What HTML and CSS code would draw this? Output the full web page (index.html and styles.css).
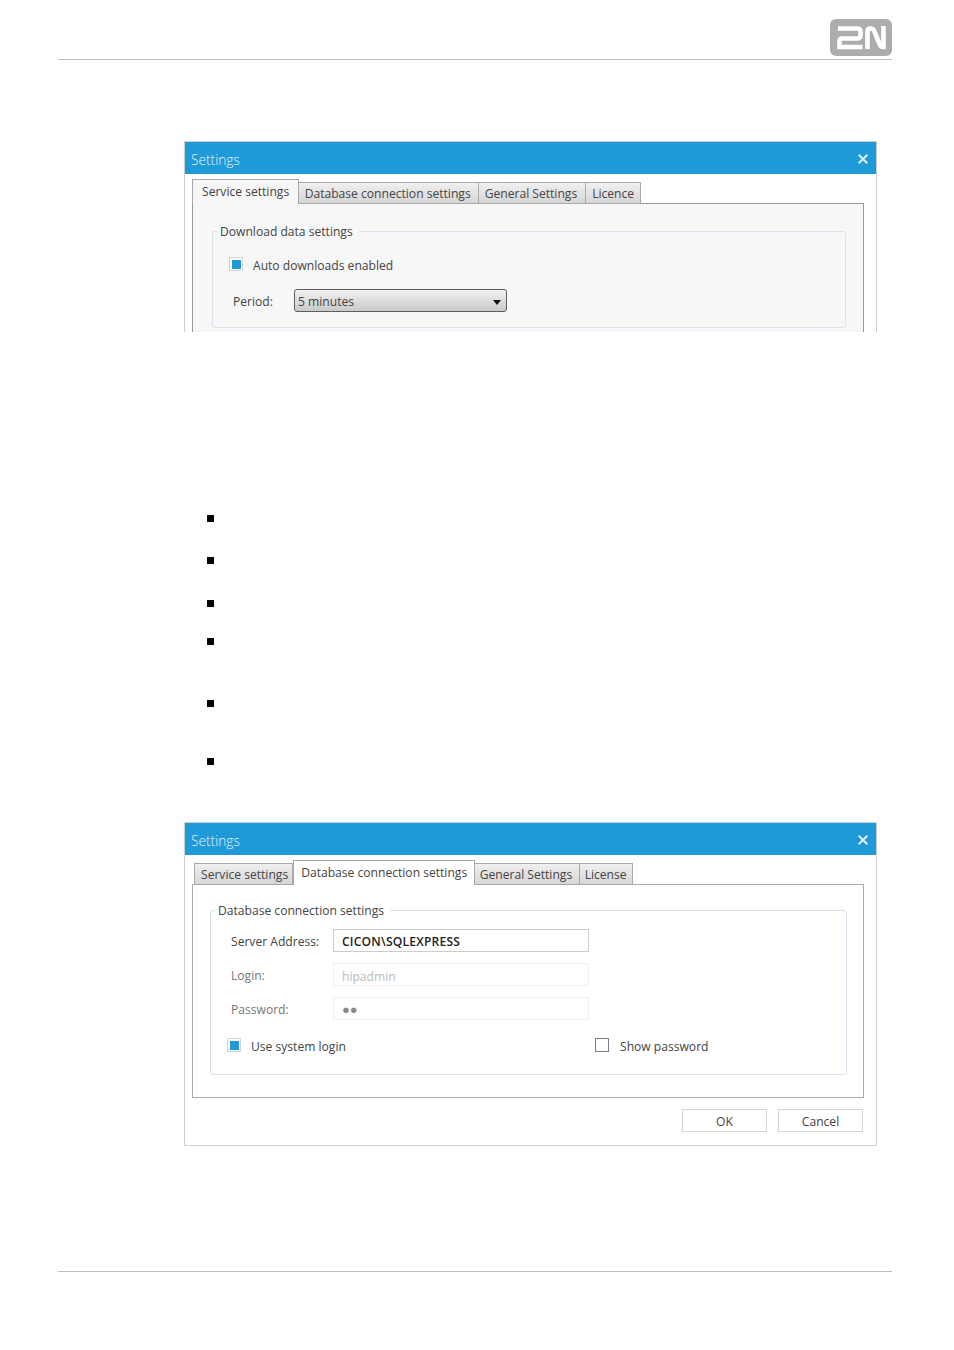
FILE: index.html
```html
<!DOCTYPE html>
<html lang="en">
<head>
<meta charset="utf-8">
<title>Settings</title>
<link rel="stylesheet" href="styles.css">
</head>
<body>
<header class="page-head">
  <svg class="logo" viewBox="0 0 62 37" width="62" height="37" aria-label="2N logo">
    <rect width="62" height="37" rx="6" fill="#adadad"/>
    <path class="logo-mark" d="M8 9.5H27Q30.5 9.5 30.5 12.5V16Q30.5 19.5 27 19.5H12Q9.5 19.5 9.5 22V28H32.5"/>
    <path class="logo-mark" d="M37.5 30V12Q37.5 9.5 40 9.5H41Q43 9.5 44 11.5L50 26Q51 28 53 28H53.5V7"/>
  </svg>
</header>
<main class="content">
  <section class="dialog dialog-cropped">
    <div class="titlebar">
      <span class="title">Settings</span>
      <svg class="close" viewBox="0 0 10 10" width="10" height="10"><path d="M.7.7 9.3 9.3M9.3.7.7 9.3"/></svg>
    </div>
    <div class="dialog-body">
      <div class="tabs tabs-service">
        <div class="tab tab-active">Service settings</div>
        <div class="tab">Database connection settings</div>
        <div class="tab">General Settings</div>
        <div class="tab">Licence</div>
      </div>
      <div class="panel panel-grey">
        <fieldset class="group group-service">
          <legend>Download data settings</legend>
          <div class="check check-auto"><span class="box box-on"></span><span class="check-text">Auto downloads enabled</span></div>
          <div class="period">
            <span class="period-label">Period:</span>
            <div class="combo"><span>5 minutes</span><span class="arrow"></span></div>
          </div>
        </fieldset>
      </div>
    </div>
  </section>

  <ul class="bullets">
    <li></li><li></li><li></li><li></li><li></li><li></li>
  </ul>

  <section class="dialog">
    <div class="titlebar">
      <span class="title">Settings</span>
      <svg class="close" viewBox="0 0 10 10" width="10" height="10"><path d="M.7.7 9.3 9.3M9.3.7.7 9.3"/></svg>
    </div>
    <div class="dialog-body">
      <div class="tabs tabs-db">
        <div class="tab">Service settings</div>
        <div class="tab tab-active">Database connection settings</div>
        <div class="tab">General Settings</div>
        <div class="tab">License</div>
      </div>
      <div class="panel panel-white">
        <fieldset class="group group-db">
          <legend>Database connection settings</legend>
          <div class="field"><span class="field-label">Server Address:</span><div class="input input-strong">CICON\SQLEXPRESS</div></div>
          <div class="field field-off"><span class="field-label">Login:</span><div class="input">hipadmin</div></div>
          <div class="field field-off"><span class="field-label">Password:</span><div class="input input-dots">●●</div></div>
          <div class="check-row">
            <div class="check check-system"><span class="box box-on"></span><span class="check-text">Use system login</span></div>
            <div class="check check-show"><span class="box box-off"></span><span class="check-text">Show password</span></div>
          </div>
        </fieldset>
      </div>
      <div class="actions">
        <div class="btn">OK</div>
        <div class="btn">Cancel</div>
      </div>
    </div>
  </section>
</main>
<footer class="page-foot"></footer>
</body>
</html>
```

FILE: styles.css
```css
* { box-sizing: border-box; }
html, body { margin: 0; padding: 0; background: #fff; }
body { font: 12.1px/16px "Open Sans", "Noto Sans", sans-serif; color: #444; }

.page-head {
  height: 60px;
  margin: 0 62px 0 58px;
  padding-top: 19px;
  border-bottom: 1px solid #bdbdbd;
  display: flex;
  justify-content: flex-end;
  align-items: flex-start;
}
.logo { display: block; }
.logo-mark { fill: none; stroke: #fff; stroke-width: 4.6; }

.content { margin-left: 184px; width: 693px; }

.dialog { border: 1px solid #cfcfcf; background: #fff; }
.dialog-cropped { margin-top: 81px; height: 191px; overflow: hidden; border-bottom: 0; }

.titlebar {
  height: 32px;
  background: #1e9ad8;
  display: flex;
  align-items: center;
  justify-content: space-between;
  padding: 3px 8px 0 6px;
}
.title { font-size: 13.7px; font-weight: 300; color: #e4f3fb; }
.close { margin-top: -1px; }
.close path { fill: none; stroke: #dff0fa; stroke-width: 2; }

.dialog-body { padding: 0 12px 0 7px; }

.tabs { height: 29px; display: flex; align-items: flex-end; }
.tabs-db { padding-left: 2px; }
.tab {
  height: 22px;
  margin-bottom: -1px;
  padding: 3px 7px 0 6px;
  border: 1px solid #a9a9a9;
  border-left-width: 0;
  background: linear-gradient(#f0f0f0, #d6d6d6);
  color: #444;
  white-space: nowrap;
}
.tab:first-child { border-left-width: 1px; }
.tab-active {
  position: relative;
  height: 25px;
  padding: 4px 8.5px 0 9px;
  border-width: 1px 1px 0 1px;
  border-color: #a9a9a9;
  background: #f7f7f7;
}
.tabs-service .tab:nth-child(3) { padding-right: 8px; }
.tabs-service .tab:nth-child(4) { padding-right: 6px; }
.tabs-db .tab:nth-child(1) { padding-right: 4px; }
.tabs-db .tab:nth-child(2) { background: #fff; padding-left: 7px; padding-right: 7px; }
.tabs-db .tab:nth-child(3) { padding-left: 4.5px; padding-right: 6.5px; }
.tabs-db .tab:nth-child(4) { padding-left: 5px; padding-right: 5px; }

.panel { width: 672px; border: 1px solid #9a9a9a; }
.panel-grey { background: #f7f7f7; height: 160px; padding: 18px 17px 0 19px; }
.panel-white { background: #fff; height: 214px; padding: 16px 16px 22px 17px; border-color: #ababab; }

.group {
  margin: 0;
  padding: 0;
  min-width: 0;
  border: 1px solid #d7e2ec;
  border-radius: 3px;
}
.group legend { margin-left: -12px; padding: 2px 6px 0 3px; color: #444; }
.group-service { height: 106px; padding: 17px 0 0 16px; }
.group-db { padding: 10px 0 22px 16px; }

.check { display: flex; align-items: center; gap: 10px; height: 14px; }
.check-text { padding-top: 4px; }
.check-show { gap: 11px; }
.box { display: flex; align-items: center; justify-content: center; width: 14px; height: 14px; flex: none; background: #fff; }
.box-on { border: 1px solid #d4d4d4; }
.box-on::before { content: ""; width: 9px; height: 9px; background: #1e9ad8; }
.box-off { border: 1px solid #7d7d7d; }

.period { display: flex; align-items: center; margin: 18px 0 0 4px; }
.period-label { width: 61px; padding-top: 2px; }
.combo {
  width: 213px;
  height: 23px;
  padding: 2px 5px 0 3px;
  border: 1px solid #5e5e5e;
  border-radius: 3px;
  background: linear-gradient(#f2f2f2, #c9c9c9);
  display: flex;
  align-items: center;
  justify-content: space-between;
}
.arrow { width: 0; height: 0; margin-top: 1px; border: 4px solid transparent; border-top: 5px solid #111; border-bottom: 0; }

.field { display: flex; align-items: center; height: 23px; margin: 0 0 11px 4px; }
.field-label { width: 102px; padding-top: 2px; }
.input {
  width: 256px;
  height: 23px;
  padding: 2px 0 0 8px;
  border: 1px solid #cdcdcd;
  line-height: 19px;
}
.input-strong { color: #222; font-weight: 600; letter-spacing: .2px; }
.field-off .field-label { color: #777; }
.field-off .input { padding-top: 3px; border-color: #efefef; color: #bbb; }
.field-off .input-dots { padding-top: 2px; color: #888; font-size: 13px; }

.check-row { display: flex; margin-top: 18px; }
.check-system { width: 368px; }

.actions { display: flex; justify-content: flex-end; gap: 11px; padding: 11px 1px 13px 0; }
.btn {
  width: 85px;
  height: 23px;
  border: 1px solid #d4d4d4;
  text-align: center;
  line-height: 23px;
}

.bullets { list-style: none; margin: 183px 0 57px 23px; padding: 0; display: flex; flex-direction: column; }
.bullets li { width: 7px; height: 7px; background: #000; }
.bullets li:nth-child(2) { margin-top: 35px; }
.bullets li:nth-child(3) { margin-top: 36px; }
.bullets li:nth-child(4) { margin-top: 31px; }
.bullets li:nth-child(5) { margin-top: 55px; }
.bullets li:nth-child(6) { margin-top: 51px; }

.page-foot { margin: 125px 62px 0 58px; border-top: 1px solid #bdbdbd; }
```
